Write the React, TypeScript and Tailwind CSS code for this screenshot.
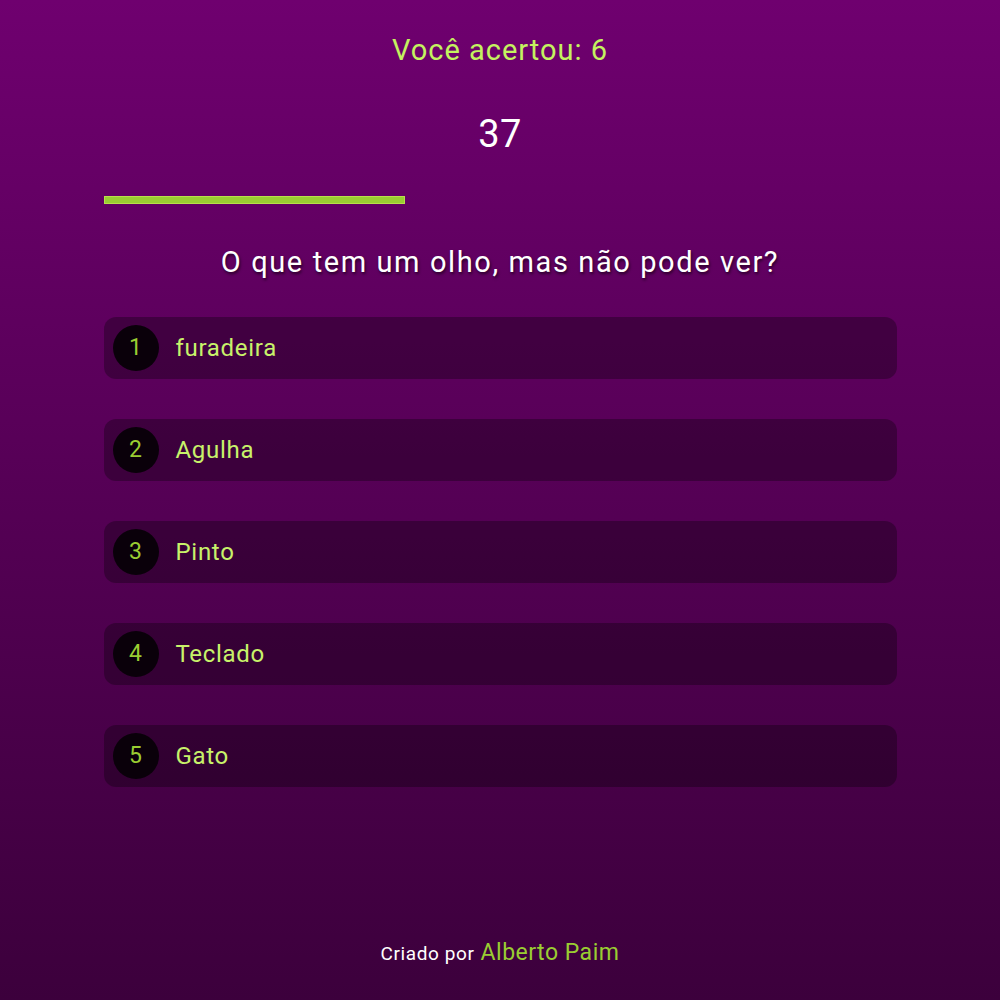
import React from 'react';

const options = ['furadeira', 'Agulha', 'Pinto', 'Teclado', 'Gato'];

export default function App() {
  const timeLeft = 37;
  const progress = 38;

  return (
    <div className="min-h-[1000px] w-full bg-gradient-to-b from-[#6f006f] to-[#3c003c] font-['Roboto','Liberation_Sans',sans-serif] flex flex-col items-center">
      <div className="w-[793px] flex flex-col items-center">
        <h1 className="mt-[31px] h-[38px] leading-[38px] text-[29px] tracking-[1px] text-[#c4f25f]">Você acertou: 6</h1>
        <div className="mt-[43px] h-[44px] leading-[44px] text-[38px] tracking-[0.5px] text-white">{timeLeft}</div>

        <div className="mt-[40px] w-full h-[8px]">
          <div
            className="h-full bg-[#9acd32] border border-[#b8e04a]"
            style={{ width: `${progress}%` }}
          />
        </div>

        <h2 className="mt-[39px] h-[38px] leading-[38px] text-[29px] tracking-[1.6px] text-white [text-shadow:1px_2px_3px_rgba(0,0,0,0.6)]">
          O que tem um olho, mas não pode ver?
        </h2>

        <ul className="mt-[36px] w-full flex flex-col gap-[40px]">
          {options.map((opt, i) => (
            <li
              key={i}
              className="h-[62px] rounded-[12px] bg-black/30 flex items-center pl-[9px] cursor-pointer"
            >
              <span className="w-[46px] h-[46px] rounded-full bg-[#0a000a] flex items-center justify-center text-[23px] text-[#9acd32]">
                {i + 1}
              </span>
              <span className="ml-[17px] text-[24px] tracking-[0.7px] text-[#c8f26a]">{opt}</span>
            </li>
          ))}
        </ul>
      </div>

      <footer className="mt-auto mb-[30px] pt-[120px] flex items-baseline gap-[6px]">
        <span className="text-[19px] tracking-[0.6px] text-white">Criado por</span>
        <span className="text-[23px] tracking-[0.5px] text-[#9acd32]">Alberto Paim</span>
      </footer>
    </div>
  );
}
